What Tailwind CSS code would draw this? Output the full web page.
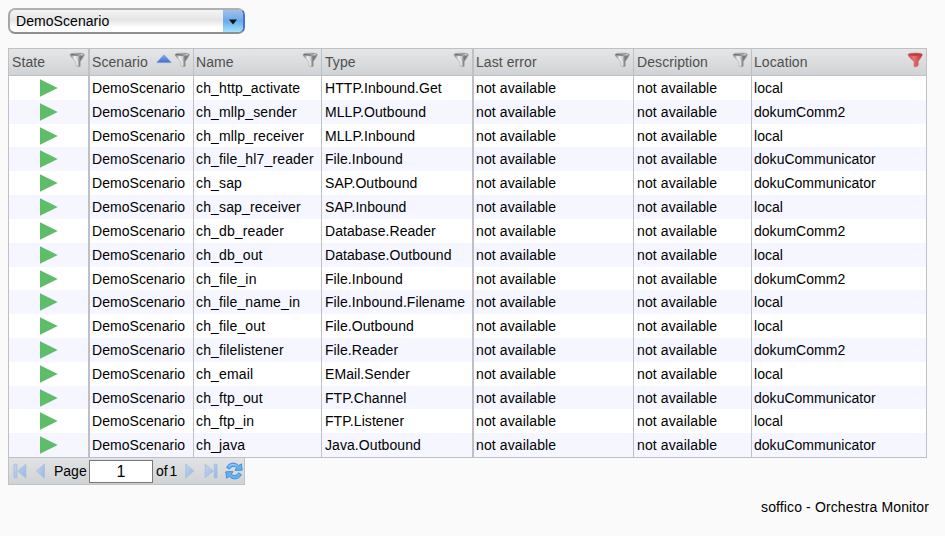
<!DOCTYPE html>
<html lang="en">
<head>
<meta charset="utf-8">
<title>Orchestra Monitor</title>
<script src="https://cdn.jsdelivr.net/npm/@tailwindcss/browser@4"></script>
</head>
<body class="h-[536px] overflow-hidden bg-[#fafafa] pt-2 pl-2 font-['Liberation_Sans',Arial,sans-serif] text-[14px] leading-4 text-black">
<svg width="0" height="0" class="absolute">
  <defs>
    <linearGradient id="metal"><stop offset="0" stop-color="#777"/><stop offset=".3" stop-color="#e4e4e4"/><stop offset=".5" stop-color="#d8d8d8"/><stop offset=".7" stop-color="#777"/><stop offset="1" stop-color="#888"/></linearGradient>
    <linearGradient id="red"><stop offset="0" stop-color="#c9444a"/><stop offset=".4" stop-color="#e87474"/><stop offset="1" stop-color="#b8323a"/></linearGradient>
    <linearGradient id="rim"><stop offset="0" stop-color="#666"/><stop offset=".5" stop-color="#8a8a8a"/><stop offset="1" stop-color="#dedede"/></linearGradient>
    <linearGradient id="blue" x2="0" y2="1"><stop offset="0" stop-color="#86a9ed"/><stop offset="1" stop-color="#3f6ed0"/></linearGradient>
    <linearGradient id="pale" x2="1" y2="1"><stop offset="0" stop-color="#c6d6ef"/><stop offset="1" stop-color="#97b5e3"/></linearGradient>
    <symbol id="funnel" viewBox="0 0 16 16"><path d="M1 2.6C1 .5 15.4 .5 15.4 2.6C15.2 4.4 12.6 7.4 11.2 9.6V14.2Q9.4 15.4 7 14V9.8C5.4 8 1.2 4.6 1 2.6Z" fill="url(#metal)" stroke="#999" stroke-width=".5"/><ellipse cx="8.2" cy="2.7" rx="6.3" ry="1.3" fill="url(#rim)"/><path d="M5 5.2L8.2 9.4V13.8" fill="none" stroke="#f0f0f0" stroke-width="1.1"/></symbol>
    <symbol id="funnelred" viewBox="0 0 16 16"><path d="M1 2.6C1 .5 15.4 .5 15.4 2.6C15.2 4.4 12.6 7.4 11.2 9.6V13.6Q9 15.6 7 14.6V9.8C5.4 8 1.2 4.6 1 2.6Z" fill="url(#red)" stroke="#cf6368" stroke-width=".5"/><ellipse cx="8.2" cy="2.7" rx="6.1" ry="1.2" fill="#c13b43"/></symbol>
  </defs>
</svg>

<div class="flex h-[26px] w-[237px] overflow-hidden rounded-[7px] border-2 border-t-[#b0b0b0] border-r-[#4674c4] border-b-[#8f8f8f] border-l-[#a6a6a6] bg-linear-to-b from-[#f4f4f4] from-0% via-[#e5e5e5] via-45% to-white to-80%">
  <span class="flex-1 pt-[3px] pl-[6px] tracking-[0.06px]">DemoScenario</span>
  <span class="flex w-[20px] items-center justify-center bg-linear-to-b from-[#a3bfe8] via-[#68a9ea] via-50% to-[#a2e4ff]">
    <svg width="8" height="6" viewBox="0 0 8 6" class="mt-[1px]"><path d="M0 .5H8L4 5.5Z" fill="#111"/></svg>
  </span>
</div>

<div id="grid" class="mt-[14px] w-[919px] border border-[#bfc0c4]"></div>

<div class="flex h-[27px] w-[237px] items-center border border-t-0 border-[#c0c1c5] bg-linear-to-b from-[#e1e2e4] to-[#d0d3d5]">
  <svg class="ml-1" width="14" height="16" viewBox="0 0 14 16" fill="url(#pale)" stroke="#a3bbe2" stroke-width=".8" stroke-linejoin="round"><path d="M1 1.2H3.8V14.8H1ZM12.8 1.2V14.8L4.6 8Z"/></svg>
  <svg class="ml-[9px]" width="9" height="16" viewBox="0 0 9 16" fill="url(#pale)" stroke="#a3bbe2" stroke-width=".8" stroke-linejoin="round"><path d="M8.4 1V15L.6 8Z"/></svg>
  <span class="ml-[9px] w-[35px]">Page</span>
  <span class="h-[23px] w-[64px] border border-[#777] bg-white text-center text-[16px] leading-[21px]">1</span>
  <span class="ml-[3px] w-[22px] whitespace-nowrap [word-spacing:-2px]">of 1</span>
  <svg class="ml-[7px]" width="9" height="16" viewBox="0 0 9 16" fill="url(#pale)" stroke="#a3bbe2" stroke-width=".8" stroke-linejoin="round"><path d="M.8 1V15L8.6 8Z"/></svg>
  <svg class="ml-[10px]" width="14" height="16" viewBox="0 0 14 16" fill="url(#pale)" stroke="#a3bbe2" stroke-width=".8" stroke-linejoin="round"><path d="M10.2 1.2H13V14.8H10.2ZM1.2 1.2V14.8L9.4 8Z"/></svg>
  <svg class="ml-[7px]" width="18" height="18" viewBox="0 0 18 18" stroke-linejoin="round">
    <g fill="#62b2f2" stroke="#3483d6" stroke-width=".8"><path d="M1.6 5.4C4 .2 10.6 -.2 13.6 3.6L16.4 1.8L17.2 8.2L10 8.4L11.6 5.8C9.4 3.6 6 4.2 4.6 7.2Z"/><path d="M1.6 5.4C4 .2 10.6 -.2 13.6 3.6L16.4 1.8L17.2 8.2L10 8.4L11.6 5.8C9.4 3.6 6 4.2 4.6 7.2Z" transform="rotate(180 9 9)"/></g>
    <path d="M4 4.6C6 2 10 1.8 12.4 4.4" fill="none" stroke="#9cd2fa" stroke-width="1"/>
  </svg>
</div>

<footer class="mt-[14px] pr-4 text-right tracking-[0.12px]">soffico - Orchestra Monitor</footer>

<script>
const funnel = '<svg class="shrink-0" width="16" height="16"><use href="#funnel"/></svg>';
const redFunnel = '<svg class="shrink-0" width="16" height="16"><use href="#funnelred"/></svg>';
const sortUp = '<svg class="mt-[2px] mr-[2px] ml-auto" width="16" height="10" viewBox="0 0 16 10"><path d="M.8 8.6L7.3 1.4Q8 .7 8.7 1.4L15.2 8.6Z" fill="url(#blue)" stroke="#6f92da" stroke-width=".6"/></svg>';
const play = '<svg class="mt-[3px] ml-[31px]" width="18" height="18" viewBox="0 0 18 18"><path d="M0 .2L17.7 9L0 17.8Z" fill="#5ebd68"/></svg>';
const rows = [
  ['ch_http_activate','HTTP.Inbound.Get','local'],
  ['ch_mllp_sender','MLLP.Outbound','dokumComm2'],
  ['ch_mllp_receiver','MLLP.Inbound','local'],
  ['ch_file_hl7_reader','File.Inbound','dokuCommunicator'],
  ['ch_sap','SAP.Outbound','dokuCommunicator'],
  ['ch_sap_receiver','SAP.Inbound','local'],
  ['ch_db_reader','Database.Reader','dokumComm2'],
  ['ch_db_out','Database.Outbound','local'],
  ['ch_file_in','File.Inbound','dokumComm2'],
  ['ch_file_name_in','File.Inbound.Filename','local'],
  ['ch_file_out','File.Outbound','local'],
  ['ch_filelistener','File.Reader','dokumComm2'],
  ['ch_email','EMail.Sender','local'],
  ['ch_ftp_out','FTP.Channel','dokuCommunicator'],
  ['ch_ftp_in','FTP.Listener','local'],
  ['ch_java','Java.Outbound','dokuCommunicator']
];
const borders = ['', 'border-l-2', 'border-l', 'border-l', 'border-l-2', 'border-l', 'border-l'];
const pads = ['pl-[3px]', 'pl-[2px]', 'pl-[2px]', 'pl-[3px]', 'pl-[2px]', 'pl-[3px]', 'pl-[2px]'];
const tracks = ['', 'tracking-[0.05px]', 'tracking-[0.14px]', 'tracking-[0.07px]', 'tracking-[0.12px]', 'tracking-[0.12px]', 'tracking-[0.02px]'];
const heads = ['State', 'Scenario', 'Name', 'Type', 'Last error', 'Description', 'Location'];
let html = '<div class="grid h-[27px] grid-cols-[79px_105px_128px_151px_161px_118px_175px] border-b border-[#bfc0c4] bg-linear-to-b from-[#e5e6e8] to-[#d0d3d5] text-[#4f4f4f]">';
heads.forEach((h, i) => {
  html += `<div class="flex ${borders[i]} ${pads[i]} pr-[3px] border-[#bfc0c4] pt-[3px]"><span class="mt-[2px] whitespace-nowrap tracking-[0.08px]">${h}</span>${i === 1 ? sortUp : '<span class="flex-1"></span>'}${i === 6 ? redFunnel : funnel}</div>`;
});
html += '</div>';
rows.forEach(([name, type, loc], r) => {
  html += `<div class="grid h-[23.8125px] grid-cols-[79px_105px_128px_151px_161px_118px_175px] ${r % 2 ? 'bg-[#f5f6ff]' : 'bg-white'}">`;
  [play, 'DemoScenario', name, type, 'not available', 'not available', loc].forEach((v, i) => {
    html += `<div class="${borders[i]} ${i ? pads[i] : ''} ${tracks[i]} ${i ? 'pt-1' : ''} border-[#bfc0c4] whitespace-nowrap">${v}</div>`;
  });
  html += '</div>';
});
document.getElementById('grid').innerHTML = html;
</script>
</body>
</html>
